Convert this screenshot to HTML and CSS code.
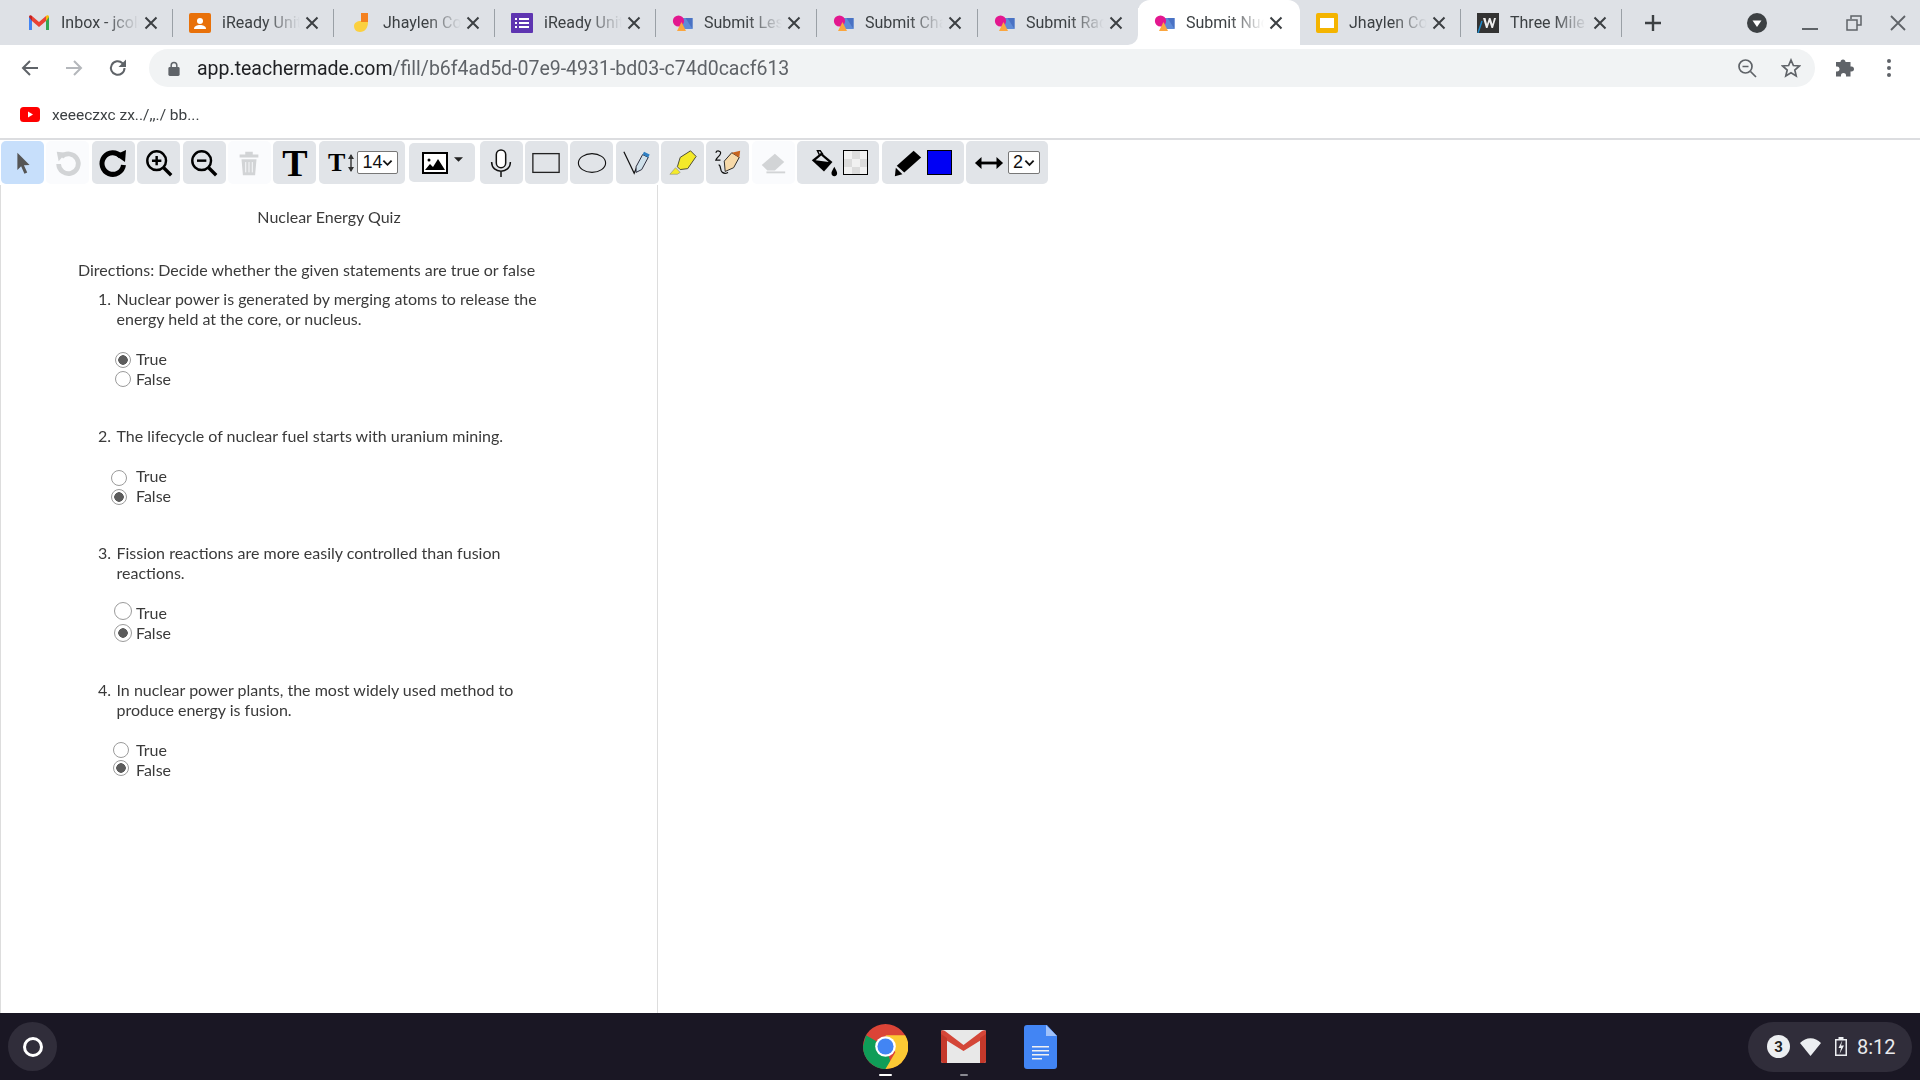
FILE: index.html
```html
<!DOCTYPE html>
<html lang="en">
<head>
    <meta charset="UTF-8">
    <title>Submit Nuclear Energy Quiz</title>
    <link rel="stylesheet" href="styles.css">
</head>
<body>
    <svg class="defs" width="0" height="0">
        <defs>
            <symbol id="ic-submit" viewBox="0 0 20 16">
                <rect x="7" y="3" width="13" height="11" fill="#5f8bd8"/>
                <path d="M13 3h7v11z" fill="#4a72c4"/>
                <circle cx="6" cy="6" r="5.6" fill="#e3178f"/>
                <path d="M4.500 16 9 7l4.500 9z" fill="#fba63f"/>
            </symbol>
            <symbol id="ic-close" viewBox="0 0 14 14">
                <path d="M1.500 1.500l11 11M12.500 1.500l-11 11" stroke="#3c4043" stroke-width="2" fill="none"/>
            </symbol>
            <symbol id="ic-chevron" viewBox="0 0 12 8">
                <path d="M1.500 1.500 6 6l4.500-4.500" stroke="#111" stroke-width="2" fill="none"/>
            </symbol>
            <linearGradient id="grad-rect" x1="0" y1="0" x2="1" y2="1">
                <stop offset="0" stop-color="#f4f8fa"/>
                <stop offset="1" stop-color="#2f6f86"/>
            </linearGradient>
            <linearGradient id="grad-oval" x1="0" y1="0" x2="1" y2="1">
                <stop offset="0" stop-color="#f2f2ff"/>
                <stop offset="1" stop-color="#2323ee"/>
            </linearGradient>
        </defs>
    </svg>

    <header class="browser">
        <div class="tabstrip">
            <div class="tab sep">
                <svg class="fav fav-gmail" viewBox="0 0 20 15"><path d="M0 15V2l3-1 0 14z" fill="#4285f4"/><path d="M20 15V2l-3-1v14z" fill="#34a853"/><path d="M3 1l7 6 7-6v5l-7 6-7-6z" fill="#ea4335"/><path d="M0 2c0-2 2-2.500 3-1v5z" fill="#c5221f"/><path d="M20 2c0-2-2-2.500-3-1v5z" fill="#fbbc04"/></svg>
                <span class="tab-title">Inbox - jcoleman</span>
                <svg class="tab-x"><use href="#ic-close"/></svg>
            </div>
            <div class="tab sep">
                <svg class="fav fav-box" viewBox="0 0 22 20"><rect width="22" height="20" rx="2" fill="#e8710a"/><circle cx="11" cy="8" r="3" fill="#fff"/><path d="M5 16c0-3 3-4 6-4s6 1 6 4z" fill="#fff"/></svg>
                <span class="tab-title">iReady Unit</span>
                <svg class="tab-x"><use href="#ic-close"/></svg>
            </div>
            <div class="tab sep">
                <svg class="fav fav-box" viewBox="0 0 22 20"><path d="M11 0h7v9h-7z" fill="#f48120"/><path d="M11 9h7c0 6-3 10-8 10-4 0-6-3-6-6s3-5 7-5z" fill="#fbd03f"/></svg>
                <span class="tab-title">Jhaylen Coleman</span>
                <svg class="tab-x"><use href="#ic-close"/></svg>
            </div>
            <div class="tab sep">
                <svg class="fav fav-box" viewBox="0 0 22 20"><rect width="22" height="20" rx="1" fill="#5e35b1"/><path d="M4 5h2v2H4zM8 5h10v2H8zM4 9h2v2H4zM8 9h10v2H8zM4 13h2v2H4zM8 13h10v2H8z" fill="#fff"/></svg>
                <span class="tab-title">iReady Unit</span>
                <svg class="tab-x"><use href="#ic-close"/></svg>
            </div>
            <div class="tab sep">
                <svg class="fav fav-submit"><use href="#ic-submit"/></svg>
                <span class="tab-title">Submit Lesson</span>
                <svg class="tab-x"><use href="#ic-close"/></svg>
            </div>
            <div class="tab sep">
                <svg class="fav fav-submit"><use href="#ic-submit"/></svg>
                <span class="tab-title">Submit Chapter</span>
                <svg class="tab-x"><use href="#ic-close"/></svg>
            </div>
            <div class="tab before-active">
                <svg class="fav fav-submit"><use href="#ic-submit"/></svg>
                <span class="tab-title">Submit Radiation</span>
                <svg class="tab-x"><use href="#ic-close"/></svg>
            </div>
            <div class="tab active">
                <svg class="fav fav-submit"><use href="#ic-submit"/></svg>
                <span class="tab-title">Submit Nuclear</span>
                <svg class="tab-x"><use href="#ic-close"/></svg>
            </div>
            <div class="tab sep after-active">
                <svg class="fav fav-box" viewBox="0 0 22 20"><rect width="22" height="20" rx="2" fill="#f4b400"/><rect x="4" y="5" width="14" height="10" fill="#fff"/></svg>
                <span class="tab-title">Jhaylen Coleman</span>
                <svg class="tab-x"><use href="#ic-close"/></svg>
            </div>
            <div class="tab sep">
                <svg class="fav fav-box" viewBox="0 0 22 20"><rect width="22" height="20" fill="#333"/><path d="M1 20l4-12" stroke="#1e88c7" stroke-width="1.500"/><path d="M6 5h2.500l1.500 6 2-6h1.500l2 6 1.500-6H19l-3 10h-1.500l-2-6-2 6H9z" fill="#eee"/></svg>
                <span class="tab-title">Three Mile Island</span>
                <svg class="tab-x"><use href="#ic-close"/></svg>
            </div>
            <svg class="new-tab" viewBox="0 0 18 18"><path d="M9 1v16M1 9h16" stroke="#3c4043" stroke-width="2.400"/></svg>
            <div class="win-slot win-first">
                <svg class="win-media" viewBox="0 0 20 20"><circle cx="10" cy="10" r="10" fill="#3c4043"/><path d="M5.500 7.500h9L10 14z" fill="#fff"/></svg>
            </div>
            <div class="win-slot"><svg class="win-icon" viewBox="0 0 16 16"><path d="M0 14h16" stroke="#5f6368" stroke-width="2"/></svg></div>
            <div class="win-slot"><svg class="win-icon" viewBox="0 0 16 16"><path d="M5 4V1h10v9h-4M1 5h10v10H1z" stroke="#5f6368" stroke-width="1.500" fill="none"/></svg></div>
            <div class="win-slot"><svg class="win-icon" viewBox="0 0 16 16"><path d="M1 1l14 14M15 1 1 15" stroke="#5f6368" stroke-width="1.800"/></svg></div>
        </div>

        <div class="navbar">
            <div class="nav-slot"><svg class="nav-icon" viewBox="0 0 20 20"><path d="M18 10H3M10 3l-7 7 7 7" stroke="#5f6368" stroke-width="2" fill="none"/></svg></div>
            <div class="nav-slot"><svg class="nav-icon" viewBox="0 0 20 20"><path d="M2 10h15M10 3l7 7-7 7" stroke="#b4b7bb" stroke-width="2" fill="none"/></svg></div>
            <div class="nav-slot"><svg class="nav-icon" viewBox="0 0 20 20"><path d="M16.500 10a6.800 6.800 0 1 1-2-4.800L17 7.500" stroke="#5f6368" stroke-width="2" fill="none"/><path d="M18 1.500V9h-7.500z" fill="#5f6368"/></svg></div>
            <div class="omnibox">
                <svg class="lock" viewBox="0 0 12 16"><path d="M3 7V4.500a3 3 0 0 1 6 0V7" stroke="#5f6368" stroke-width="1.600" fill="none"/><rect y="6.500" width="12" height="9.500" rx="1.500" fill="#5f6368"/></svg>
                <span class="url"><b>app.teachermade.com</b>/fill/b6f4ad5d-07e9-4931-bd03-c74d0cacf613</span>
                <div class="nav-slot"><svg class="nav-icon" viewBox="0 0 20 20"><circle cx="8.500" cy="8.500" r="6.500" stroke="#5f6368" stroke-width="1.700" fill="none"/><path d="M13.500 13.500 19 19M5.500 8.500h6" stroke="#5f6368" stroke-width="1.700"/></svg></div>
                <div class="nav-slot"><svg class="nav-icon" viewBox="0 0 20 20"><path d="M10 2l2.400 5.500 6 .5-4.600 4 1.400 5.900L10 14.800l-5.200 3.100L6.200 12 1.600 8l6-.5z" stroke="#5f6368" stroke-width="1.700" fill="none"/></svg></div>
            </div>
            <div class="nav-slot"><svg class="nav-icon" viewBox="0 0 20 20"><path d="M8 1.500c1.500 0 2.500 1 2.500 2.500h5v4.500c2.500-.5 3.500 1 3.500 2.500s-1 3-3.500 2.500v5H11c.5-2.500-1-3.500-2.500-3.500S5.500 16 6 18.500H1v-5c2.500.5 3.500-1 3.500-2.500S3.500 8 1 8.500V4h4.500C5.500 2.500 6.500 1.500 8 1.500z" fill="#5f6368"/></svg></div>
            <div class="nav-slot"><svg class="nav-icon" viewBox="0 0 20 20"><circle cx="10" cy="3" r="2" fill="#5f6368"/><circle cx="10" cy="10" r="2" fill="#5f6368"/><circle cx="10" cy="17" r="2" fill="#5f6368"/></svg></div>
        </div>

        <div class="bookmarks">
            <svg class="yt" viewBox="0 0 20 15"><rect width="20" height="15" rx="3.500" fill="#f00"/><path d="M8 4.500l5 3-5 3z" fill="#fff"/></svg>
            <span class="bm-title">xeeeczxc zx../,,./ bb...</span>
        </div>
    </header>

    <div class="tools">
        <div class="tool selected"><svg class="ti" viewBox="0 0 32 32"><path d="M10 5l13 13-6 .5 3.500 7.500-3 1.500-3.500-8-4 4z" fill="#555"/></svg></div>
        <div class="tool off"><svg class="ti" viewBox="0 0 32 32"><path d="M9 9.500A10.500 10.500 0 1 1 6 17" stroke="#d2d4d6" stroke-width="5" fill="none"/><path d="M4 4l10 1-8 9z" fill="#d2d4d6"/></svg></div>
        <div class="tool"><svg class="ti ti-big" viewBox="0 0 32 32"><path d="M24 9.500A10.800 10.800 0 1 0 26.500 18" stroke="#000" stroke-width="5" fill="none"/><path d="M29 3l-1 12-10-7z" fill="#000"/></svg></div>
        <div class="tool"><svg class="ti" viewBox="0 0 32 32"><circle cx="13.500" cy="13.500" r="10" stroke="#000" stroke-width="2.600" fill="none"/><path d="M21 21l8 8" stroke="#000" stroke-width="3.600"/><path d="M13.500 8.500v10M8.500 13.500h10" stroke="#000" stroke-width="2.600"/></svg></div>
        <div class="tool"><svg class="ti" viewBox="0 0 32 32"><circle cx="13.500" cy="13.500" r="10" stroke="#000" stroke-width="2.600" fill="none"/><path d="M21 21l8 8" stroke="#000" stroke-width="3.600"/><path d="M8.500 13.500h10" stroke="#000" stroke-width="2.600"/></svg></div>
        <div class="tool off"><svg class="ti" viewBox="0 0 32 32"><path d="M6 7h20v3H6zM12 4h8v3h-8z" fill="#d2d4d6"/><path d="M8 12h16l-1.500 17h-13z" fill="#d2d4d6"/><path d="M12.500 15v11M16 15v11M19.500 15v11" stroke="#fafbfd" stroke-width="1"/></svg></div>
        <div class="tool"><span class="serif-t">T</span></div>
        <div class="tool tool-size">
            <span class="serif-t small">T</span>
            <svg class="updown" viewBox="0 0 8 20"><path d="M4 2v16" stroke="#333" stroke-width="1.400"/><path d="M1 6l3-5 3 5zM1 14l3 5 3-5z" fill="#333"/></svg>
            <div class="pick">14<svg class="chev"><use href="#ic-chevron"/></svg></div>
        </div>
        <div class="tool tool-image">
            <svg class="pic" viewBox="0 0 26 22"><rect x="1" y="1" width="24" height="20" fill="#fff" stroke="#000" stroke-width="2"/><path d="M3 18l5-6 3 3 5-8 7 11z" fill="#000"/><circle cx="7" cy="8" r="1.500" fill="#000"/></svg>
            <svg class="caret" viewBox="0 0 10 5"><path d="M0 0h10L5 5z" fill="#222"/></svg>
        </div>
        <div class="tool"><svg class="ti" viewBox="0 0 32 32"><rect x="11" y="2" width="10" height="19" rx="5" fill="#fff" stroke="#111" stroke-width="1.600"/><path d="M6 15c0 13 20 13 20 0M16 25v6" stroke="#111" stroke-width="1.600" fill="none"/></svg></div>
        <div class="tool"><svg class="ti" viewBox="0 0 32 32"><rect x="2" y="6" width="28" height="20" fill="url(#grad-rect)" stroke="#222" stroke-width="1.400"/></svg></div>
        <div class="tool"><svg class="ti" viewBox="0 0 32 32"><ellipse cx="16" cy="16" rx="14.500" ry="10" fill="url(#grad-oval)" stroke="#111" stroke-width="1.200"/></svg></div>
        <div class="tool"><svg class="ti" viewBox="0 0 32 32"><path d="M2 4l11 23 3-7" stroke="#111" stroke-width="1.300" fill="none"/><path d="M15 20l7-13 6 3-7 13-6 3z" fill="#cfe0ea" stroke="#223" stroke-width="1"/><path d="M22 7l1.500-3 6 3-1.500 3z" fill="#2f80c4"/></svg></div>
        <div class="tool"><svg class="ti" viewBox="0 0 32 32"><path d="M13 10l11-7 6 6-9 13-8 1-3-3z" fill="#f4ea2a" stroke="#443" stroke-width="1"/><path d="M8 21l5 5-3 2H2z" fill="#f4ea2a" stroke="#887" stroke-width=".6"/></svg></div>
        <div class="tool"><svg class="ti" viewBox="0 0 32 32"><path d="M3 5c1-3 6-2 5 1s-4 4-5 7h5M6 18c3 0 1 6 4 8s4 1 6 0" stroke="#111" stroke-width="1.300" fill="none"/><path d="M13 25l-1-11 8-9 8 5-6 11z" fill="#f7d9a8" stroke="#222" stroke-width="1"/><path d="M20 5l8 5 1-7z" fill="#c8641e"/></svg></div>
        <div class="tool off"><svg class="ti" viewBox="0 0 32 32"><path d="M4 18 18 6l10 9-10 9h-8z" fill="#d2d4d6"/><path d="M9 26h20" stroke="#d2d4d6" stroke-width="2"/></svg></div>
        <div class="tool tool-color">
            <svg class="ti" viewBox="0 0 32 32"><path d="M3 13 13 5l12 10-9 10z" fill="#000"/><path d="M7 13l6-5 8 7z" fill="#e1e4e8"/><path d="M11 7 9 3h3l3 4" stroke="#000" stroke-width="1.500" fill="none"/><path d="M27 20c2 4 3 5 3 7a3 3 0 0 1-6 0c0-2 1-3 3-7z" fill="#000"/></svg>
            <div class="swatch checker"></div>
        </div>
        <div class="tool tool-color">
            <svg class="ti" viewBox="0 0 32 32"><path d="M22 3l8 7-18 16-8-7z" fill="#000"/><path d="M3 21l7 7-8 2z" fill="#000"/></svg>
            <div class="swatch blue"></div>
        </div>
        <div class="tool tool-width">
            <svg class="ti" viewBox="0 0 32 32"><path d="M7 14.500h18v3H7z" fill="#000"/><path d="M8 9.500v13L1 16zM24 9.500v13l7-6.500z" fill="#000"/></svg>
            <div class="pick pick-small">2<svg class="chev"><use href="#ic-chevron"/></svg></div>
        </div>
    </div>

    <main class="workspace">
        <section class="sheet">
            <h1 class="quiz-title">Nuclear Energy Quiz</h1>
            <p class="directions">Directions: Decide whether the given statements are true or false</p>

            <div class="question">
                <span class="qnum">1.</span>
                <p class="qtext">Nuclear power is generated by merging atoms to release the<br>energy held at the core, or nucleus.</p>
            </div>
            <div class="options q1">
                <label class="option"><span class="slot"><input type="radio" name="q1" checked class="down1"></span>True</label>
                <label class="option"><span class="slot"><input type="radio" name="q1"></span>False</label>
            </div>

            <div class="question">
                <span class="qnum">2.</span>
                <p class="qtext">The lifecycle of nuclear fuel starts with uranium mining.</p>
            </div>
            <div class="options q2">
                <label class="option"><span class="slot"><input type="radio" name="q2" class="down2"></span>True</label>
                <label class="option"><span class="slot"><input type="radio" name="q2" checked class="down1"></span>False</label>
            </div>

            <div class="question">
                <span class="qnum">3.</span>
                <p class="qtext">Fission reactions are more easily controlled than fusion<br>reactions.</p>
            </div>
            <div class="options q3">
                <label class="option"><span class="slot"><input type="radio" name="q3" class="up2"></span>True</label>
                <label class="option"><span class="slot"><input type="radio" name="q3" checked></span>False</label>
            </div>

            <div class="question">
                <span class="qnum">4.</span>
                <p class="qtext">In nuclear power plants, the most widely used method to<br>produce energy is fusion.</p>
            </div>
            <div class="options q4">
                <label class="option"><span class="slot"><input type="radio" name="q4"></span>True</label>
                <label class="option"><span class="slot"><input type="radio" name="q4" checked class="up2"></span>False</label>
            </div>
        </section>
    </main>

    <footer class="shelf">
        <div class="launcher"><span class="ring"></span></div>
        <div class="apps">
            <div class="app">
                <svg class="app-chrome" viewBox="0 0 48 48">
                    <circle cx="24" cy="24" r="24" fill="#db4437"/>
                    <path d="M24 24 3.200 12 0 24c0 13 11 24 24 24l6-6z" fill="#0f9d58"/>
                    <path d="M24 12h21a24 24 0 0 1-21 36l10.500-18z" fill="#fcc934"/>
                    <circle cx="24" cy="24" r="11" fill="#fff"/>
                    <circle cx="24" cy="24" r="8.600" fill="#4285f4"/>
                </svg>
                <span class="dot"></span>
            </div>
            <div class="app">
                <svg class="app-gmail" viewBox="0 0 45 33">
                    <rect width="45" height="33" rx="2" fill="#e8e8e8"/>
                    <path d="M0 2c0-2 2-2.500 4-1l18.500 14L41 1c2-1.500 4-1 4 1v5L22.500 21 0 7z" fill="#d44638"/>
                    <path d="M0 4l6 4v25H2a2 2 0 0 1-2-2zM45 4l-6 4v25h4a2 2 0 0 0 2-2z" fill="#c5392b"/>
                </svg>
                <span class="dot dim"></span>
            </div>
            <div class="app">
                <svg class="app-docs" viewBox="0 0 33 44">
                    <path d="M3 0h20l10 11v30a3 3 0 0 1-3 3H3a3 3 0 0 1-3-3V3a3 3 0 0 1 3-3z" fill="#4285f4"/>
                    <path d="M22 0l11 11H22z" fill="#a1c2fa"/>
                    <path d="M8 21h17v1.500H8zM8 25h17v1.500H8zM8 29h17v1.500H8zM8 33h10v1.500H8z" fill="#f1f1f1"/>
                </svg>
            </div>
        </div>
        <div class="tray">
            <span class="badge">3</span>
            <svg class="wifi" viewBox="0 0 21 18"><path d="M0 5c6-6.500 15-6.500 21 0L10.500 18z" fill="#eceef1"/></svg>
            <svg class="battery" viewBox="0 0 12 19"><path d="M3.500 0h5v2H12v17H0V2h3.500z" fill="#eceef1"/><path d="M1.500 3.500h9v14h-9z" fill="#302d3a"/><path d="M7.500 3 3.500 11h2.500l-1.500 6 4.500-8.500H6z" fill="#eceef1"/></svg>
            <span class="clock">8:12</span>
        </div>
    </footer>
</body>
</html>
```

FILE: styles.css
```css
html, body {
    margin: 0;
    padding: 0;
    width: 1920px;
    height: 1080px;
    overflow: hidden;
    background: #fff;
    font-family: Roboto, sans-serif;
}

body {
    display: flex;
    flex-direction: column;
}

.defs {
    display: none;
}

.tabstrip {
    display: flex;
    align-items: center;
    height: 45px;
    padding-left: 12px;
    background: #dee1e6;
}

.tab {
    display: flex;
    align-items: center;
    position: relative;
    flex: none;
    width: 161px;
    height: 45px;
    box-sizing: border-box;
    padding-left: 16px;
    filter: blur(0.3px);
}

.tab:first-child {
    padding-left: 17px;
}

.tab.sep::after {
    content: "";
    position: absolute;
    right: 0;
    top: 9px;
    height: 28px;
    width: 1.500px;
    background: #9aa0a6;
}

.tab.active {
    width: 162px;
    background: #fff;
    border-radius: 12px 12px 0 0;
    filter: none;
}

.tab.before-active {
    border-radius: 0 0 10px 0;
    background: #dee1e6;
    width: 160px;
    box-shadow: 8px 8px 0 0 #fff;
    clip-path: inset(0 -8px 0 0);
    z-index: 0;
}

.tab.active {
    z-index: 1;
}

.tab.after-active {
    background: #dee1e6;
    border-radius: 0 0 0 10px;
}

.fav {
    flex: none;
}

.fav-gmail {
    width: 20px;
    height: 15px;
    margin-right: 12px;
}

.fav-box {
    width: 22px;
    height: 20px;
    margin-right: 11px;
}

.fav-submit {
    width: 21px;
    height: 16px;
    margin-right: 11px;
}

.tab-title {
    flex: none;
    width: 78px;
    overflow: hidden;
    white-space: nowrap;
    font-size: 16px;
    color: #3c4043;
    -webkit-mask-image: linear-gradient(to right, #000 55%, transparent 100%);
    mask-image: linear-gradient(to right, #000 55%, transparent 100%);
}

.tab-x {
    flex: none;
    width: 14px;
    height: 14px;
    margin-left: 5px;
}

.new-tab {
    flex: none;
    width: 18px;
    height: 18px;
    margin-left: 22px;
}

.win-slot {
    display: flex;
    align-items: center;
    justify-content: center;
    flex: none;
    width: 44px;
    height: 45px;
}

.win-first {
    margin-left: auto;
    margin-right: 9px;
}

.win-media {
    width: 20px;
    height: 20px;
}

.win-icon {
    width: 16px;
    height: 16px;
}

.navbar {
    display: flex;
    align-items: center;
    height: 46px;
    padding-left: 8px;
    background: #fff;
}

.nav-slot {
    display: flex;
    align-items: center;
    justify-content: center;
    flex: none;
    width: 44px;
    height: 38px;
}

.nav-icon {
    width: 20px;
    height: 20px;
}

.omnibox {
    display: flex;
    align-items: center;
    flex: none;
    width: 1666px;
    height: 38px;
    box-sizing: border-box;
    margin: 0 8px 0 9px;
    padding-left: 19px;
    padding-right: 2px;
    border-radius: 19px;
    background: #f1f3f4;
}

.lock {
    flex: none;
    width: 12px;
    height: 15px;
    margin-right: 17px;
}

.url {
    flex: 1;
    font-size: 19.500px;
    color: #5f6368;
    white-space: nowrap;
    filter: blur(0.3px);
}

.url b {
    font-weight: 400;
    color: #202124;
}

.bookmarks {
    display: flex;
    align-items: center;
    height: 49px;
    padding-left: 20px;
    box-sizing: border-box;
    border-bottom: 2px solid #dcdde0;
}

.yt {
    width: 20px;
    height: 15px;
    margin-right: 12px;
}

.bm-title {
    font-size: 15.500px;
    color: #3c4043;
    filter: blur(0.3px);
}

.tools {
    display: flex;
    align-items: center;
    gap: 2.400px;
    height: 45px;
    padding-left: 1px;
}

.tool {
    display: flex;
    align-items: center;
    justify-content: center;
    flex: none;
    width: 43px;
    height: 43px;
    border-radius: 5px;
    background: #e1e4e8;
}

.tool.selected {
    background: #c7dffb;
}

.tool.off {
    background: #fafbfd;
}

.tool-size {
    width: 86px;
    gap: 2px;
    padding-left: 3px;
    box-sizing: border-box;
}

.tool-image {
    width: 66px;
    height: 39px;
    gap: 6px;
    margin: 0 2px;
}

.tool-color {
    width: 82px;
    gap: 4px;
}

.tool-width {
    width: 82px;
    gap: 4px;
}

.ti {
    width: 30px;
    height: 30px;
}

.ti-big {
    width: 32px;
    height: 32px;
}

.serif-t {
    font-family: "Liberation Serif", serif;
    font-weight: 700;
    font-size: 38px;
    line-height: 1;
    color: #000;
}

.serif-t.small {
    font-size: 26px;
}

.updown {
    width: 8px;
    height: 20px;
}

.pick {
    display: flex;
    align-items: center;
    justify-content: space-between;
    width: 41px;
    height: 23px;
    box-sizing: border-box;
    padding: 0 4px 0 4px;
    border: 1px solid #777;
    border-radius: 2px;
    background: #fff;
    font-family: "Liberation Sans", sans-serif;
    font-size: 18px;
    color: #111;
}

.pick-small {
    width: 32px;
}

.chev {
    width: 11px;
    height: 8px;
}

.pic {
    width: 26px;
    height: 22px;
}

.caret {
    width: 9px;
    height: 5px;
    margin-bottom: 6px;
}

.swatch {
    width: 25px;
    height: 25px;
    box-sizing: border-box;
    border: 1px solid #000;
}

.swatch.blue {
    background: #0000f5;
}

.swatch.checker {
    background-color: #f1f1f1;
    background-image: conic-gradient(#dcdcdc 25%, transparent 0 50%, #dcdcdc 0 75%, transparent 0);
    background-size: 16px 16px;
}

.workspace {
    flex: 1;
    min-height: 0;
}

.sheet {
    width: 658px;
    height: 100%;
    box-sizing: border-box;
    padding-top: 22px;
    border-left: 1px solid #ddd;
    border-right: 1px solid #ddd;
    font-family: Lato, sans-serif;
    font-size: 16px;
    line-height: 20px;
    color: #3a3a3a;
    filter: blur(0.4px);
}

.quiz-title {
    margin: 0;
    font-size: inherit;
    font-weight: 400;
    text-align: center;
}

.directions {
    margin: 33px 0 9px 77px;
}

.question {
    display: flex;
    margin: 37px 0 20px;
    padding-left: 97px;
}

.directions + .question {
    margin-top: 0;
}

.qnum {
    width: 18.500px;
    flex: none;
}

.qtext {
    margin: 0;
    white-space: nowrap;
}

.option {
    display: flex;
    align-items: center;
    height: 20px;
}

.slot {
    display: flex;
    align-items: center;
    justify-content: flex-end;
    flex: none;
    box-sizing: border-box;
    width: 135px;
    height: 20px;
}

.q1 .slot { padding-right: 5px; }
.q2 .slot { padding-right: 9px; }
.q3 .slot { padding-right: 3.700px; }
.q4 .slot { padding-right: 7px; }

input[type="radio"] {
    appearance: none;
    -webkit-appearance: none;
    flex: none;
    box-sizing: border-box;
    width: 16px;
    height: 16px;
    margin: 0;
    border: 1px solid #9a9a9a;
    border-radius: 50%;
    background: #fff;
}

.q3 input[type="radio"] {
    width: 18.500px;
    height: 18.500px;
}

input[type="radio"]:checked {
    background: radial-gradient(circle, #5c5c5c 0 4.500px, #fff 5px);
}

input.down1 { margin-top: 2px; }
input.down2 { margin-top: 4px; }
input.up2 { margin-bottom: 4px; }

.shelf {
    display: grid;
    grid-template-columns: 1fr auto 1fr;
    align-items: center;
    flex: none;
    height: 67px;
    padding: 0 8px;
    box-sizing: border-box;
    background: #1a1724;
}

.launcher {
    display: flex;
    align-items: center;
    justify-content: center;
    width: 49px;
    height: 49px;
    border-radius: 50%;
    background: #302d3a;
}

.ring {
    width: 20px;
    height: 20px;
    box-sizing: border-box;
    border: 3px solid #fff;
    border-radius: 50%;
}

.apps {
    display: flex;
    align-items: center;
    gap: 33px;
    height: 67px;
}

.app {
    display: flex;
    flex-direction: column;
    align-items: center;
    position: relative;
}

.app-chrome {
    width: 45px;
    height: 45px;
}

.app-gmail {
    width: 45px;
    height: 33px;
}

.app-docs {
    width: 33px;
    height: 44px;
    margin-left: 5px;
}

.dot {
    position: absolute;
    bottom: -7px;
    width: 13px;
    height: 2.500px;
    border-radius: 1px;
    background: #fff;
}

.dot.dim {
    bottom: -13px;
    width: 8px;
    background: #8a8a92;
}

.tray {
    display: flex;
    align-items: center;
    justify-self: end;
    width: 164px;
    height: 50px;
    box-sizing: border-box;
    padding-left: 19px;
    border-radius: 25px;
    background: #302d3a;
}

.badge {
    display: flex;
    align-items: center;
    justify-content: center;
    flex: none;
    width: 23px;
    height: 23px;
    border-radius: 50%;
    background: #eceef1;
    color: #222;
    font-size: 15px;
    font-weight: 700;
}

.wifi {
    width: 21px;
    height: 18px;
    margin-left: 10px;
}

.battery {
    width: 12px;
    height: 19px;
    margin-left: 14px;
}

.clock {
    margin-left: 10px;
    font-size: 20px;
    color: #e8eaed;
}
```
